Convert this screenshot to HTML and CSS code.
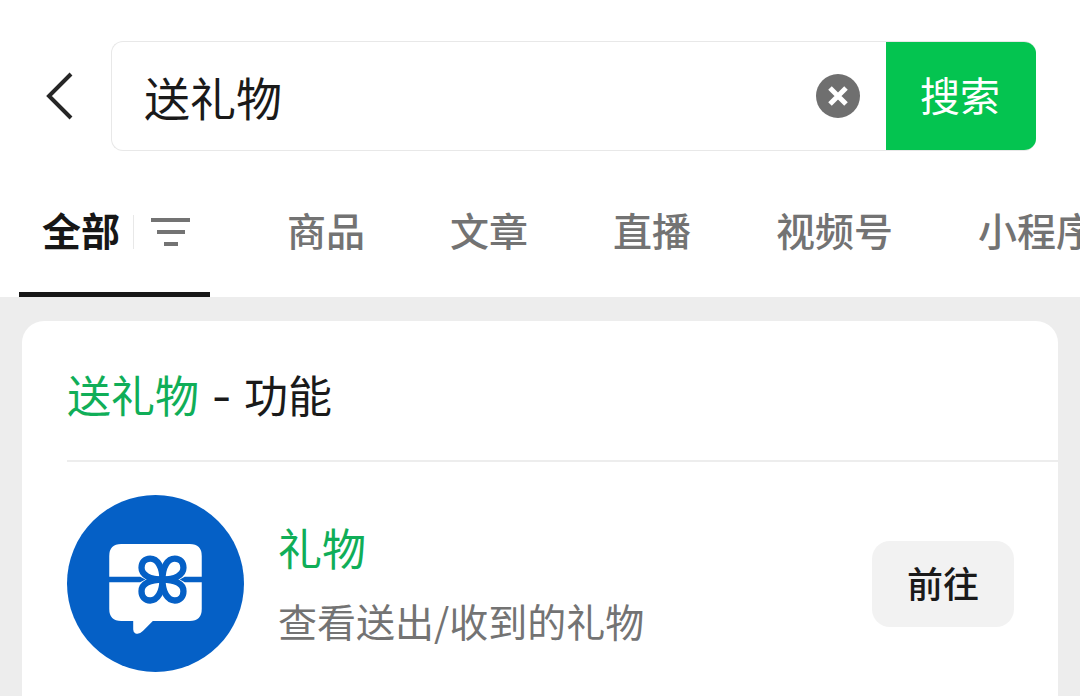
FILE: index.html
```html
<!DOCTYPE html>
<html lang="zh-CN">
<head>
  <meta charset="UTF-8">
  <meta name="viewport" content="width=device-width, initial-scale=1">
  <title>送礼物</title>
  <link rel="stylesheet" href="styles.css">
</head>
<body>
  <header class="header">
    <form class="search" onsubmit="return false">
      <button type="button" class="back" aria-label="返回">
        <svg width="28" height="48" viewBox="0 0 28 48" fill="none" stroke="#262626" stroke-width="4">
          <path d="M26 2 4 24l22 22"/>
        </svg>
      </button>
      <div class="search-box">
        <input class="search-input" type="text" value="送礼物" aria-label="搜索内容">
        <button type="button" class="clear" aria-label="清除">
          <svg width="44" height="44" viewBox="0 0 44 44">
            <circle cx="22" cy="22" r="22" fill="#6f6f6f"/>
            <path d="M14 14l16 16M30 14l-16 16" stroke="#fff" stroke-width="5"/>
          </svg>
        </button>
        <button type="submit" class="search-btn">搜索</button>
      </div>
    </form>

    <nav class="tabs">
      <div class="tab-active">
        <a href="#all" class="tab active">全部</a>
        <button type="button" class="filter" aria-label="筛选">
          <svg width="40" height="30" viewBox="0 0 40 30" fill="#737373">
            <path d="M0 1h39v4H0zM6 13h28v4H6zM13 25h14v4H13z"/>
          </svg>
        </button>
      </div>
      <a href="#goods" class="tab">商品</a>
      <a href="#articles" class="tab">文章</a>
      <a href="#live" class="tab">直播</a>
      <a href="#channels" class="tab">视频号</a>
      <a href="#mini" class="tab">小程序</a>
    </nav>
  </header>

  <main class="results">
    <section class="card">
      <h2 class="card-title"><em>送礼物</em> - 功能</h2>
      <div class="item">
        <svg class="item-icon" viewBox="34 29 532 532">
          <circle cx="300" cy="295" r="266" fill="#0560c6"/>
          <!-- speech bubble -->
          <path fill="#fff" d="M197 176H403Q439 176 439 212V372Q439 408 403 408H292L262 438Q251 449 240 445Q233 442 233 433V408H197Q161 408 161 372V212Q161 176 197 176Z"/>
          <!-- ribbon -->
          <path fill="#0560c6" d="M160 275H254L270 283L254 291H160ZM440 275H388L373 283L388 291H440Z"/>
          <!-- bow -->
          <g fill="#fff" stroke="#0560c6" stroke-width="19" stroke-linejoin="round">
            <path id="petal" d="M321 283C321 245 306 220 284 220C268 220 258 232 258 248C258 270 284 283 321 283Z"/>
            <use href="#petal" transform="translate(642 0) scale(-1 1)"/>
            <use href="#petal" transform="translate(0 566) scale(1 -1)"/>
            <use href="#petal" transform="translate(642 566) scale(-1 -1)"/>
          </g>
        </svg>
        <div class="item-text">
          <h3 class="item-name">礼物</h3>
          <p class="item-desc">查看送出/收到的礼物</p>
        </div>
        <button type="button" class="go">前往</button>
      </div>
    </section>
  </main>
</body>
</html>
```
FILE: styles.css
```css
* {
  box-sizing: border-box;
}

body {
  margin: 0;
  min-height: 100vh;
  display: flex;
  flex-direction: column;
  background: #ededed;
  color: #1a1a1a;
  font-family: "Noto Sans CJK SC", sans-serif;
  overflow-x: hidden;
}

button {
  padding: 0;
  border: none;
  background: none;
  color: inherit;
  font-family: inherit;
  cursor: pointer;
}

svg {
  display: block;
}

.header {
  background: #fff;
  padding-top: 41px;
}

.search {
  display: flex;
  align-items: center;
  gap: 38px;
  padding: 0 44px 0 45px;
}

.search-box {
  flex: 1;
  min-width: 0;
  display: flex;
  align-items: center;
  height: 110px;
  border: 1px solid #e8e8e8;
  border-right: none;
  border-radius: 12px;
  overflow: hidden;
}

.search-input {
  flex: 1;
  min-width: 0;
  height: 100%;
  padding: 0 0 0 32px;
  border: none;
  outline: none;
  background: none;
  color: #1a1a1a;
  font-family: inherit;
  font-size: 46px;
}

.clear {
  margin-right: 26px;
}

.search-btn {
  align-self: stretch;
  width: 150px;
  padding: 0 2px 4px 0;
  background: #04c450;
  color: #fff;
  font-size: 40px;
}

.tabs {
  display: flex;
  gap: 85px;
  height: 146px;
  padding-left: 19px;
  white-space: nowrap;
  overflow: hidden;
}

.tab {
  flex: none;
  padding-top: 49px;
  color: #737373;
  font-size: 39px;
  font-weight: 500;
  line-height: 58px;
  text-decoration: none;
}

.tab-active {
  flex: none;
  display: flex;
  margin-right: -8px;
  padding: 0 19px 0 23px;
  border-bottom: 5px solid #171717;
}

.active {
  color: #171717;
  font-weight: 700;
}

.filter {
  height: 34px;
  margin: 64px 0 0 13px;
  padding-left: 17px;
  border-left: 1px solid #e8e8e8;
}

.results {
  flex: 1;
  display: flex;
  padding: 24px 22px 0;
}

.card {
  flex: 1;
  padding-left: 45px;
  background: #fff;
  border-radius: 22px 22px 0 0;
}

.card-title {
  margin: 0;
  padding: 44px 0 31px;
  border-bottom: 2px solid #ededed;
  font-family: Inter, "Noto Sans CJK SC", sans-serif;
  font-size: 44px;
  font-weight: 400;
  line-height: 64px;
}

.card-title em,
.item-name {
  color: #10ae58;
  font-style: normal;
}

.item {
  display: flex;
  align-items: center;
  padding: 33px 44px 24px 0;
}

.item-icon {
  flex: none;
  width: 177px;
  height: 177px;
}

.item-text {
  flex: 1;
  margin-left: 34px;
  padding-bottom: 4px;
}

.item-name {
  margin: 0;
  font-size: 44px;
  font-weight: 400;
  line-height: 64px;
}

.item-desc {
  margin: 12px 0 0;
  color: #737373;
  font-size: 39px;
  line-height: 58px;
}

.go {
  width: 142px;
  height: 86px;
  padding-bottom: 4px;
  border-radius: 18px;
  background: #f2f2f2;
  font-size: 36px;
  font-weight: 500;
}
```
